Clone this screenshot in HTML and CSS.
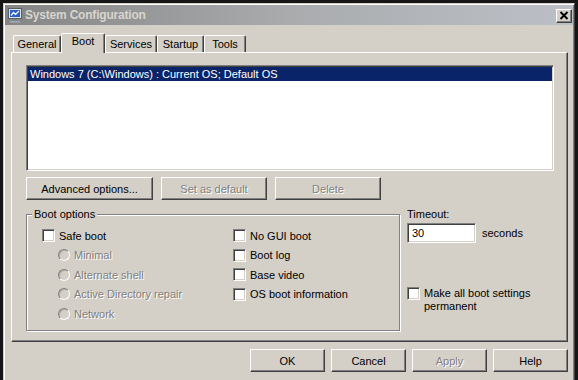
FILE: index.html
```html
<!DOCTYPE html>
<html lang="en">
<head>
    <meta charset="UTF-8">
    <title>System Configuration</title>
    <link rel="stylesheet" href="styles.css">
</head>
<body>
    <div class="window">
        <div class="titlebar">
            <svg class="app-icon" width="16" height="16" viewBox="0 0 16 16">
                <rect x="1.5" y="1.5" width="13" height="10" fill="#dfe3ea" stroke="#56606c"/>
                <rect x="3" y="3" width="10" height="7" fill="#2d5fc9"/>
                <path d="M4 8.5 L6.5 5.5 L8.5 7.5 L12 4" stroke="#fff" stroke-width="1.2" fill="none"/>
                <rect x="6" y="12" width="4" height="2" fill="#7c848e"/>
                <rect x="3" y="14" width="10" height="1.5" fill="#a4acb6"/>
            </svg>
            <span class="title">System Configuration</span>
            <div class="close-btn">
                <svg width="10" height="9" viewBox="0 0 10 9">
                    <path d="M1.5 1 L8.5 8 M8.5 1 L1.5 8" stroke="#000" stroke-width="2"/>
                </svg>
            </div>
        </div>

        <div class="dialog">
            <div class="tabs">
                <div class="tab tab-general">General</div>
                <div class="tab tab-boot active">Boot</div>
                <div class="tab tab-services">Services</div>
                <div class="tab tab-startup">Startup</div>
                <div class="tab tab-tools">Tools</div>
            </div>

            <div class="panel">
                <div class="listbox">
                    <div class="list-row selected">Windows 7 (C:\Windows) : Current OS; Default OS</div>
                </div>

                <div class="list-buttons">
                    <div class="btn btn-advanced">Advanced options...</div>
                    <div class="btn btn-list disabled">Set as default</div>
                    <div class="btn btn-list disabled">Delete</div>
                </div>

                <div class="lower">
                    <fieldset class="group">
                        <legend>Boot options</legend>
                        <div class="group-body">
                            <div class="col">
                                <div class="opt"><span class="check"></span>Safe boot</div>
                                <div class="opt sub disabled"><span class="radio"></span>Minimal</div>
                                <div class="opt sub disabled"><span class="radio"></span>Alternate shell</div>
                                <div class="opt sub disabled"><span class="radio"></span>Active Directory repair</div>
                                <div class="opt sub disabled"><span class="radio"></span>Network</div>
                            </div>
                            <div class="col">
                                <div class="opt"><span class="check"></span>No GUI boot</div>
                                <div class="opt"><span class="check"></span>Boot log</div>
                                <div class="opt"><span class="check"></span>Base video</div>
                                <div class="opt"><span class="check"></span>OS boot information</div>
                            </div>
                        </div>
                    </fieldset>

                    <div class="timeout">
                        <div class="timeout-label">Timeout:</div>
                        <div class="timeout-row">
                            <div class="textbox">30</div>
                            <span>seconds</span>
                        </div>
                        <div class="permanent">
                            <span class="check"></span>
                            <span class="permanent-text">Make all boot settings<br>permanent</span>
                        </div>
                    </div>
                </div>
            </div>

            <div class="dialog-buttons">
                <div class="btn btn-dialog">OK</div>
                <div class="btn btn-dialog">Cancel</div>
                <div class="btn btn-dialog disabled">Apply</div>
                <div class="btn btn-dialog">Help</div>
            </div>
        </div>
    </div>
</body>
</html>
```

FILE: styles.css
```css
* {
    box-sizing: border-box;
}
body {
    margin: 0;
    background-color: #161616;
    font-family: "Liberation Sans", Arial, sans-serif;
    font-size: 11px;
    color: #000;
    overflow: hidden;
}
.window {
    margin: 3px 0 0 3px;
    width: 572px;
    height: 390px;
    padding: 1px;
    background-color: #d4d0c8;
    border: 1px solid;
    border-color: #d4d0c8 #404040 #404040 #d4d0c8;
    box-shadow: inset 1px 1px #fff, inset -1px -1px #808080;
}
.titlebar {
    display: flex;
    align-items: center;
    height: 20px;
    padding: 0 1px 0 2px;
    background: linear-gradient(to right, #858585, #a9abad 50%, #bcc0c6);
}
.app-icon {
    flex: none;
}
.title {
    margin-left: 2px;
    font-weight: bold;
    font-size: 12px;
    letter-spacing: -0.2px;
    color: #d8d5ce;
    flex: 1;
}
.close-btn {
    width: 16px;
    height: 14px;
    margin-top: 1px;
    display: flex;
    align-items: center;
    justify-content: center;
    background-color: #d4d0c8;
    border: 1px solid;
    border-color: #fff #404040 #404040 #fff;
    box-shadow: inset -1px -1px #808080;
}

/* dialog body */
.dialog {
    padding: 8px 0 0 6px;
}
.tabs {
    display: flex;
    align-items: flex-end;
    height: 19px;
    margin-left: 2px;
    position: relative;
    z-index: 1;
}
.tab {
    height: 17px;
    line-height: 16px;
    text-align: center;
    background-color: #d4d0c8;
    border: 1px solid;
    border-bottom: none;
    border-color: #fff #404040 #404040 #fff;
    border-radius: 2px 2px 0 0;
    box-shadow: inset -1px 0 #808080;
}
.tab-general { width: 48px; }
.tab-services { width: 52px; }
.tab-startup { width: 47px; }
.tab-tools { width: 42px; }
.tab.active {
    width: 44px;
    height: 20px;
    margin-bottom: -1px;
    line-height: 15px;
}
.panel {
    width: 557px;
    height: 290px;
    padding: 12px 13px 0 14px;
    border: 1px solid;
    border-color: #fff #404040 #404040 #fff;
    box-shadow: inset -1px -1px #808080;
}
.listbox {
    height: 106px;
    background-color: #fff;
    border: 1px solid;
    border-color: #808080 #fff #fff #808080;
    box-shadow: inset 1px 1px #404040, inset -1px -1px #d4d0c8;
    padding: 1px;
}
.list-row {
    height: 14px;
    line-height: 14px;
    padding-left: 2px;
}
.list-row.selected {
    background-color: #0a246a;
    color: #fff;
}
.list-buttons {
    display: flex;
    gap: 8px;
    margin-top: 6px;
}
.btn {
    height: 23px;
    display: flex;
    align-items: center;
    justify-content: center;
    background-color: #d4d0c8;
    border: 1px solid;
    border-color: #fff #404040 #404040 #fff;
    box-shadow: inset -1px -1px #808080;
}
.btn-advanced { width: 127px; }
.btn-list { width: 106px; }
.disabled {
    color: #808080;
    text-shadow: 1px 1px #fff;
}

/* lower area */
.lower {
    display: flex;
    margin-top: 8px;
}
.group {
    width: 374px;
    height: 123px;
    margin: 0;
    padding: 0;
    border: 1px solid #808080;
    box-shadow: 1px 1px #fff, inset 1px 1px #fff;
}
.group legend {
    margin-left: 5px;
    padding: 0 2px;
    line-height: 13px;
    background-color: #d4d0c8;
}
.group-body {
    display: grid;
    grid-template-columns: 191px 1fr;
    padding: 5px 0 0 15px;
}
.opt {
    display: flex;
    align-items: center;
    height: 19.5px;
}
.opt.sub {
    padding-left: 16px;
}
.check {
    width: 13px;
    height: 13px;
    margin-right: 4px;
    flex: none;
    background-color: #fff;
    border: 1px solid;
    border-color: #808080 #fff #fff #808080;
    box-shadow: inset 1px 1px #404040, inset -1px -1px #d4d0c8;
}
.radio {
    width: 12px;
    height: 12px;
    margin-right: 4px;
    flex: none;
    border-radius: 50%;
    border: 1px solid;
    border-color: #808080 #fff #fff #808080;
    box-shadow: inset 1px 1px #b0aca4;
}
.timeout {
    margin-left: 7px;
}
.timeout-label {
    line-height: 13px;
}
.timeout-row {
    display: flex;
    align-items: center;
    gap: 6px;
    margin-top: 2px;
}
.textbox {
    width: 69px;
    height: 20px;
    line-height: 18px;
    padding-left: 4px;
    background-color: #fff;
    border: 1px solid;
    border-color: #808080 #fff #fff #808080;
    box-shadow: inset 1px 1px #404040, inset -1px -1px #d4d0c8;
}
.permanent {
    display: flex;
    align-items: flex-start;
    margin-top: 44px;
}
.permanent-text {
    line-height: 13px;
}
.dialog-buttons {
    display: flex;
    justify-content: flex-end;
    gap: 6px;
    width: 557px;
    margin-top: 7px;
}
.btn-dialog {
    width: 75px;
}
```
